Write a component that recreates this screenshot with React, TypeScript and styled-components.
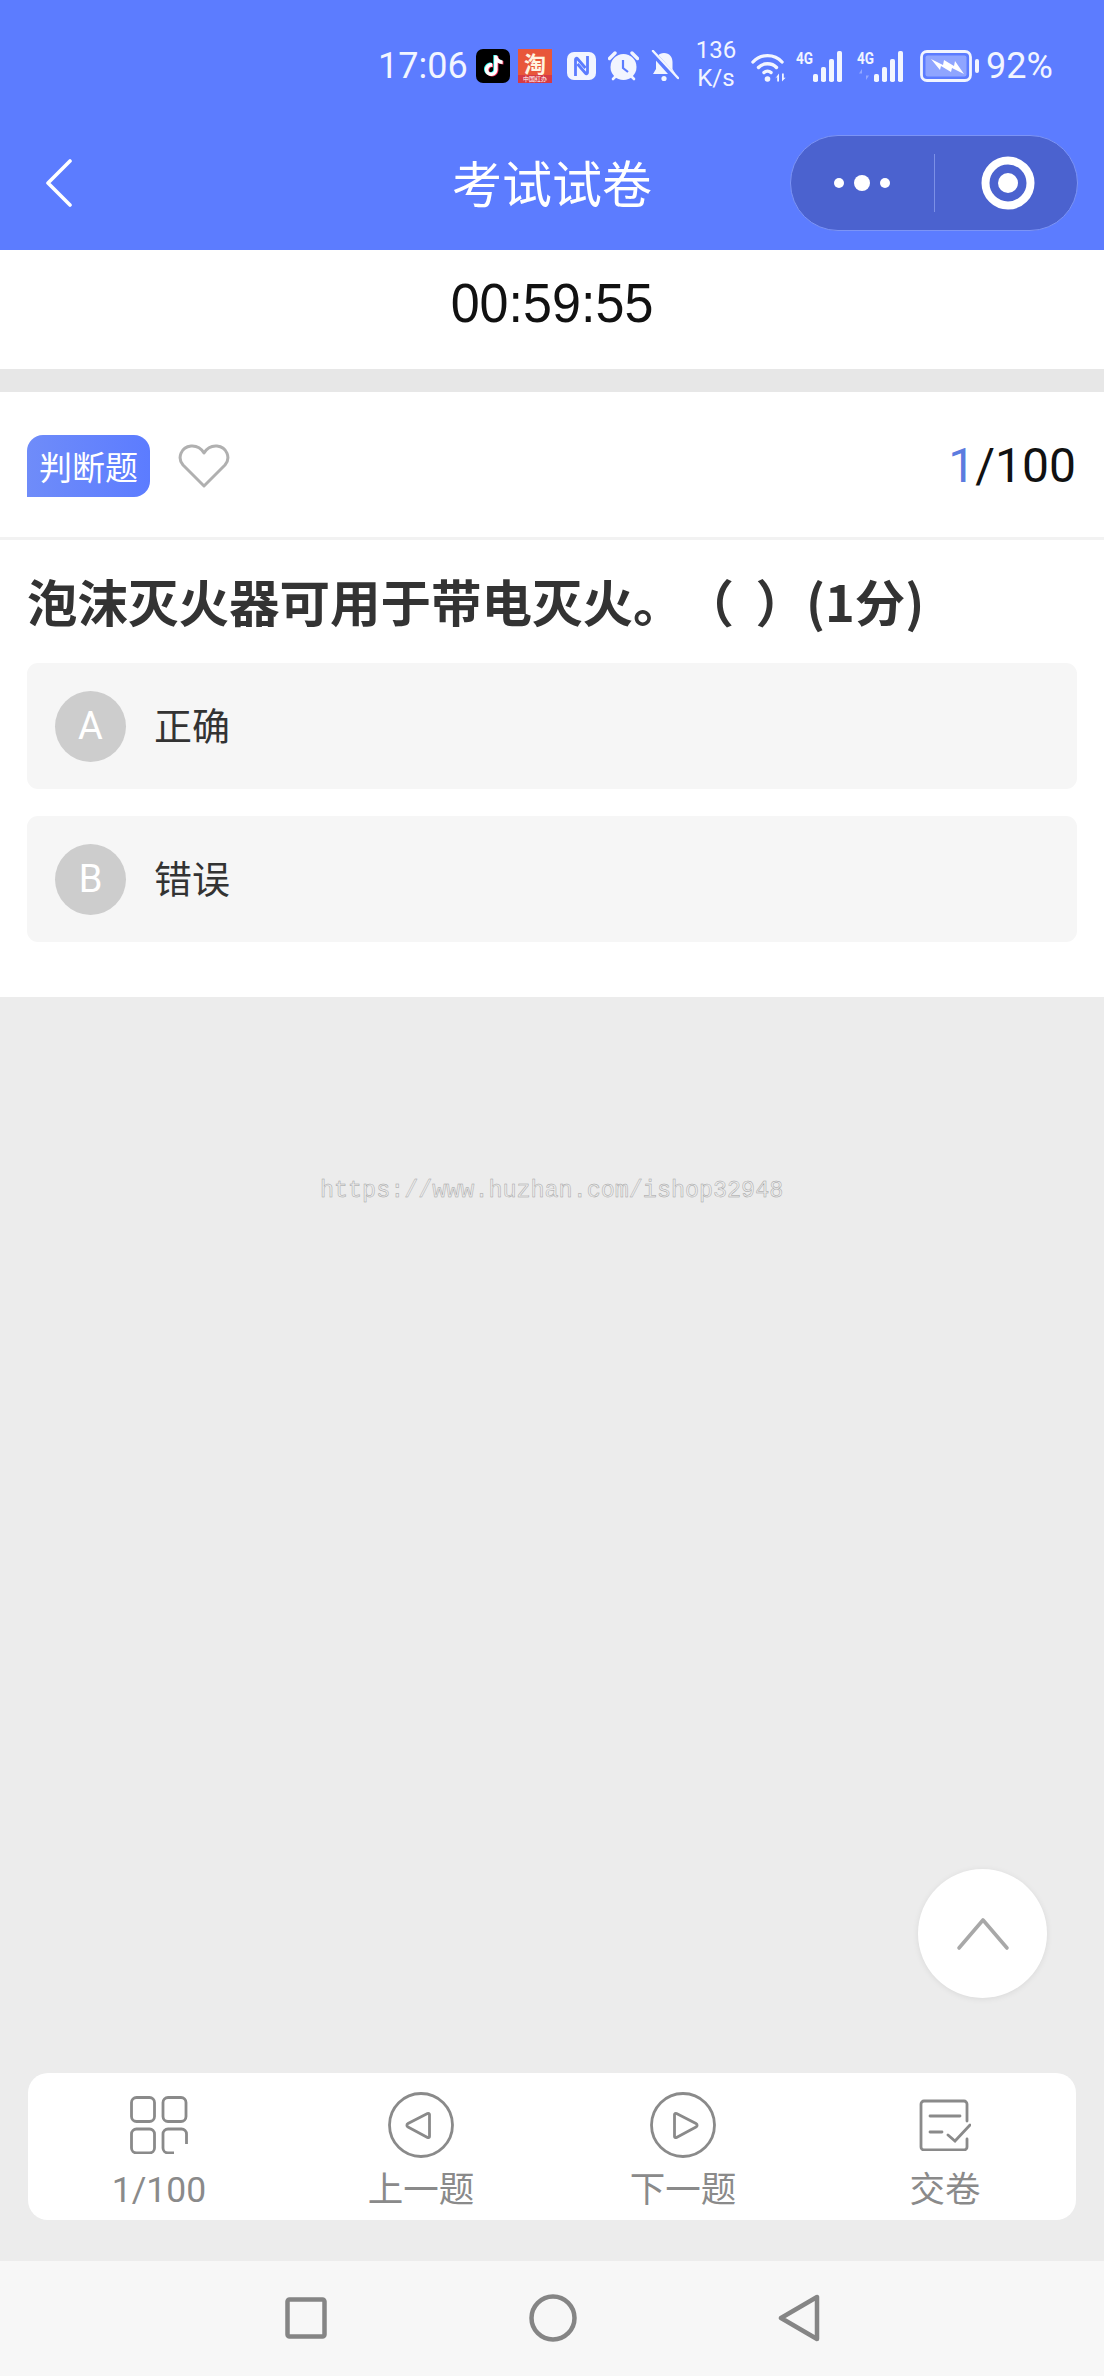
import React from 'react';
import styled, { createGlobalStyle } from 'styled-components';

const GlobalStyle = createGlobalStyle`
  html, body {
    margin: 0;
    padding: 0;
    background: #ececec;
    font-family: Roboto, "Noto Sans CJK SC", sans-serif;
  }
`;

const Page = styled.div`
  width: 1104px;
  height: 2376px;
  display: flex;
  flex-direction: column;
  overflow: hidden;
  background: #ececec;
`;

const Header = styled.header`
  background: #5c7cff;
  color: #fff;
`;

const StatusBar = styled.div`
  height: 120px;
  box-sizing: border-box;
  padding: 12px 0 0 378px;
  display: flex;
  align-items: center;
`;

const Clock = styled.span`
  font-size: 36px;
  width: 98px;
  color: #f2f5ff;
`;

const StatusIcon = styled.svg<{ $left: number }>`
  flex: none;
  margin-left: ${(p) => p.$left}px;
  display: block;
`;

const Speed = styled.span`
  flex: none;
  width: 42px;
  margin-left: 16px;
  font-size: 24px;
  line-height: 28px;
  text-align: center;
  color: #f2f5ff;
  margin-top: -5px;
`;

const BatteryText = styled.span`
  margin-left: 6px;
  font-size: 36px;
  color: #f2f5ff;
`;

const NavBar = styled.div`
  height: 130px;
  box-sizing: border-box;
  padding: 0 26px 4px;
  display: grid;
  grid-template-columns: 1fr auto 1fr;
  align-items: center;
`;

const BackIcon = styled.svg`
  display: block;
  margin-left: 20px;
`;

const NavTitle = styled.h1`
  margin: -4px 0 0;
  font-size: 50px;
  font-weight: 400;
  line-height: 60px;
  font-family: "Noto Sans CJK SC", sans-serif;
`;

const Capsule = styled.div`
  justify-self: end;
  width: 288px;
  height: 96px;
  box-sizing: border-box;
  border: 1.5px solid #7c94f6;
  border-radius: 48px;
  background: #4b62cf;
  display: flex;
  align-items: center;
`;

const CapsuleHalf = styled.div`
  flex: 1;
  display: flex;
  justify-content: center;
  align-items: center;
`;

const CapsuleLine = styled.div`
  flex: none;
  width: 1px;
  height: 58px;
  background: #7c90e6;
`;

const TargetIcon = styled.svg`
  display: block;
  margin-left: 5px;
`;

const Timer = styled.div`
  height: 119px;
  box-sizing: border-box;
  padding-bottom: 15px;
  background: #fff;
  display: flex;
  align-items: center;
  justify-content: center;
  font-family: "Liberation Sans", sans-serif;
  font-size: 56px;
  color: #111;
`;

// digits in the countdown run narrow, so the face is squeezed a little
const TimerDigits = styled.span`
  display: block;
  transform: scaleX(0.93);
`;

const Gap = styled.div`
  height: 23px;
  background: #e7e7e7;
`;

const Card = styled.section`
  background: #fff;
  padding-bottom: 55px;
`;

const CardHead = styled.div`
  height: 148px;
  box-sizing: border-box;
  padding: 2px 28px 0 27px;
  border-bottom: 3px solid #f2f2f2;
  display: flex;
  align-items: center;
`;

const Badge = styled.span`
  width: 123px;
  height: 62px;
  border-radius: 16px 16px 16px 0;
  background: linear-gradient(90deg, #6f8cf9, #5c7cff);
  color: #fff;
  font-size: 33px;
  display: flex;
  align-items: center;
  justify-content: center;
  font-family: "Noto Sans CJK SC", sans-serif;
`;

const HeartIcon = styled.svg`
  margin-left: 28px;
  display: block;
`;

const Counter = styled.div`
  margin-left: auto;
  font-size: 48px;
  color: #111;
`;

const CounterCurrent = styled.span`
  color: #5c7cdf;
`;

const Question = styled.h2`
  margin: 0;
  height: 123px;
  box-sizing: border-box;
  padding: 0 0 4px 27px;
  display: flex;
  align-items: center;
  font-family: "Noto Sans CJK SC", sans-serif;
  font-size: 50.5px;
  font-weight: 700;
  color: #333;
  white-space: pre;
  word-spacing: 10px;
  text-spacing-trim: space-all;
`;

const Options = styled.div`
  margin: 0 27px;
  display: flex;
  flex-direction: column;
  gap: 27px;
`;

const Option = styled.div`
  height: 126px;
  box-sizing: border-box;
  padding-left: 28px;
  border-radius: 11px;
  background: #f6f6f6;
  display: flex;
  align-items: center;
`;

const OptionMark = styled.span`
  width: 71px;
  height: 71px;
  border-radius: 50%;
  background: #cdcdcd;
  color: #fff;
  font-size: 38px;
  display: flex;
  align-items: center;
  justify-content: center;
`;

const OptionText = styled.span`
  margin: -6px 0 0 28px;
  font-size: 38px;
  color: #333;
  font-family: "Noto Sans CJK SC", sans-serif;
`;

const Main = styled.main`
  flex: 1;
  display: flex;
  flex-direction: column;
`;

const Watermark = styled.div`
  margin: 181px 0 0 320px;
  font-family: "Liberation Mono", monospace;
  font-size: 23.4px;
  line-height: 26px;
  color: #ececec;
  -webkit-text-stroke: 0.45px #a0a0a0;
  white-space: nowrap;
`;

const ScrollTop = styled.button`
  align-self: flex-end;
  margin: auto 57px 75px 0;
  width: 129px;
  height: 129px;
  padding: 0;
  border: none;
  border-radius: 50%;
  background: #fff;
  box-shadow: 0 1px 6px rgba(0, 0, 0, 0.08);
  display: flex;
  align-items: center;
  justify-content: center;
`;

const Toolbar = styled.nav`
  margin: 0 28px 41px;
  height: 147px;
  border-radius: 20px;
  background: #fff;
  display: grid;
  grid-template-columns: repeat(4, 1fr);
`;

const ToolItem = styled.div`
  display: flex;
  flex-direction: column;
  align-items: center;
  color: #8a8a8a;
`;

const ToolIcon = styled.div`
  height: 84px;
  padding-top: 20px;
  box-sizing: border-box;
  display: flex;
  align-items: center;
  justify-content: center;
`;

const ToolLabel = styled.span`
  margin-top: 8px;
  font-size: 35.5px;
  line-height: 50px;
  font-family: Roboto, "Noto Sans CJK SC", sans-serif;
`;

const SystemBar = styled.div`
  height: 115px;
  box-sizing: border-box;
  padding: 0 0 2px 285px;
  background: #f7f7f7;
  display: flex;
  align-items: center;
`;

const SystemButton = styled.svg<{ $left?: number }>`
  display: block;
  margin-left: ${(p) => p.$left ?? 0}px;
`;

const tiktokPath =
  'M12.525.02c1.31-.02 2.61-.01 3.91-.02.08 1.53.63 3.09 1.75 4.17 1.12 1.11 2.7 1.62 4.24 1.79v4.03c-1.44-.05-2.89-.35-4.2-.97-.57-.26-1.1-.59-1.62-.93-.01 2.92.01 5.84-.02 8.75-.08 1.4-.54 2.79-1.35 3.94-1.31 1.92-3.58 3.17-5.91 3.21-1.43.08-2.86-.31-4.08-1.03-2.02-1.19-3.44-3.37-3.65-5.71-.02-.5-.03-1-.01-1.49.18-1.9 1.12-3.72 2.58-4.96 1.66-1.44 3.98-2.13 6.15-1.72.02 1.48-.04 2.96-.04 4.44-.99-.32-2.15-.23-3.02.37-.63.41-1.11 1.04-1.36 1.75-.21.51-.15 1.07-.14 1.61.24 1.64 1.82 3.02 3.5 2.87 1.12-.01 2.19-.66 2.77-1.61.19-.33.4-.67.41-1.06.1-1.79.06-3.57.07-5.36.01-4.03-.01-8.05.02-12.07z';

const ink = '#f2f5ff';

const TiktokIcon = () => (
  <StatusIcon $left={0} width="34" height="34" viewBox="0 0 34 34">
    <rect width="34" height="34" rx="7" fill="#000" />
    <g transform="translate(7.5 6.5) scale(0.85)">
      <path d={tiktokPath} fill="#25f4ee" transform="translate(-1 -0.6)" />
      <path d={tiktokPath} fill="#fe2c55" transform="translate(1 0.6)" />
      <path d={tiktokPath} fill="#fff" />
    </g>
  </StatusIcon>
);

const TaobaoIcon = () => (
  <StatusIcon $left={8} width="34" height="34" viewBox="0 0 34 34">
    <rect width="34" height="34" fill="#e8563a" />
    <rect y="26" width="34" height="8" fill="#d63a45" />
    <text x="17" y="22.5" fontSize="22" fontWeight="700" fill="#fff4e0" textAnchor="middle" fontFamily="Noto Sans CJK SC">
      淘
    </text>
    <text x="17" y="32" fontSize="6" fill="#fff" textAnchor="middle" fontFamily="Noto Sans CJK SC">
      中国红办
    </text>
  </StatusIcon>
);

const NfcIcon = () => (
  <StatusIcon $left={15} width="29" height="28" viewBox="0 0 29 28">
    <rect width="29" height="28" rx="7" fill={ink} />
    <path d="M8.500 24V7.500c0-1.200 1.200-1.700 2-.8L18.500 16" fill="none" stroke="#5c7cff" strokeWidth="2.800" />
    <path d="M20.500 4v16.500c0 1.200-1.200 1.700-2 .8L10.500 12" fill="none" stroke="#5c7cff" strokeWidth="2.800" />
  </StatusIcon>
);

const AlarmIcon = () => (
  <StatusIcon $left={12} width="31" height="30" viewBox="0 0 31 30">
    <circle cx="15.500" cy="16" r="13" fill={ink} />
    <path d="M1.500 7.500 7 2M29.500 7.500 24 2" stroke={ink} strokeWidth="3.400" strokeLinecap="round" />
    <path d="M5 28l2.500-2.500M26 28l-2.500-2.500" stroke={ink} strokeWidth="2.600" strokeLinecap="round" />
    <path d="M15 9v8l5 4" fill="none" stroke="#5c7cff" strokeWidth="2.200" />
  </StatusIcon>
);

const MuteBellIcon = () => (
  <StatusIcon $left={11} width="29" height="33" viewBox="0 0 29 33">
    <path d="M14 3c5.500 0 8.500 4 8.500 9v7l3 5H3l3-5v-7c0-5 2.500-9 8-9z" fill={ink} />
    <circle cx="14" cy="28.500" r="2.600" fill={ink} />
    <path d="M2 2l25 28" stroke="#5c7cff" strokeWidth="5.500" />
    <path d="M3 1l25 27" stroke={ink} strokeWidth="2.400" strokeLinecap="round" />
  </StatusIcon>
);

const WifiIcon = () => (
  <StatusIcon $left={14} width="37" height="31" viewBox="0 0 37 31">
    <path d="M2 11C9.500 2.500 23.500 2.500 31 11" fill="none" stroke={ink} strokeWidth="3.400" strokeLinecap="round" />
    <path d="M7.500 16.500c4.500-5 13.500-5 18 0" fill="none" stroke={ink} strokeWidth="3.400" strokeLinecap="round" />
    <path d="M13 21.500c2-1.800 5-1.800 7 0" fill="none" stroke={ink} strokeWidth="3.400" strokeLinecap="round" />
    <circle cx="16.500" cy="28" r="2.800" fill={ink} />
    <path d="M28 22.500v8h-1.800v-4.500l-2 1.500zM31 22.500v8l3.600-3.800h-1.800v-4.200z" fill={ink} />
  </StatusIcon>
);

// 4G label with the four signal bars; dim arrows only on the second SIM
const SignalIcon = ({ left, arrows }: { left: number; arrows?: boolean }) => (
  <StatusIcon $left={left} width="50" height="32" viewBox="0 0 50 32">
    <text x="0" y="14" fontSize="17" fontWeight="700" fill={ink} fontFamily="Roboto" textLength="17" lengthAdjust="spacingAndGlyphs">
      4G
    </text>
    {arrows && <path d="M5 30V19l-3 4.500h3zM9 19v11l3-4.500H9z" fill="#93a8ff" />}
    {[
      { x: 17, y: 24 },
      { x: 25, y: 17 },
      { x: 33, y: 9 },
      { x: 41, y: 1 },
    ].map((bar) => (
      <rect key={bar.x} x={bar.x} y={bar.y} width="5" height={32 - bar.y} rx="1.800" fill={ink} />
    ))}
  </StatusIcon>
);

const BatteryIcon = () => (
  <StatusIcon $left={13} width="60" height="32" viewBox="0 0 60 32">
    <rect x="1.500" y="1.500" width="49" height="29" rx="5.500" fill="none" stroke={ink} strokeWidth="2.800" />
    <rect x="5.500" y="5.500" width="41" height="21" rx="2" fill="#8fa5ff" />
    <rect x="55" y="9" width="4" height="14" rx="2" fill={ink} />
    <path d="M11 9l12 6 1-5 10 6 1-5 9 13-12-6-1 4-10-6-1 4z" fill="#fff" />
  </StatusIcon>
);

const toolStroke = '#8a8a8a';

const GridIcon = () => (
  <svg width="58" height="58" viewBox="0 0 58 58" fill="none" stroke={toolStroke} strokeWidth="2.800">
    <rect x="1.500" y="1.500" width="23" height="24" rx="5" />
    <rect x="33" y="1.500" width="23" height="24" rx="5" />
    <rect x="1.500" y="33" width="23" height="24" rx="5" />
    <path d="M56.500 48v-10a5 5 0 0 0-5-5H38a5 5 0 0 0-5 5v14a5 5 0 0 0 5 5h6" />
  </svg>
);

const PrevIcon = () => (
  <svg width="66" height="66" viewBox="0 0 66 66" fill="none" stroke={toolStroke} strokeWidth="2.800" strokeLinejoin="round">
    <circle cx="33" cy="33" r="31.500" />
    <path d="M41.500 22.500v22c0 1-1 1.500-2 1L20 35c-1.500-.8-1.500-2.700 0-3.500l19.500-10c1-.5 2 0 2 1z" />
  </svg>
);

const NextIcon = () => (
  <svg width="66" height="66" viewBox="0 0 66 66" fill="none" stroke={toolStroke} strokeWidth="2.800" strokeLinejoin="round">
    <circle cx="33" cy="33" r="31.500" />
    <path d="M24.500 22.500v22c0 1 1 1.500 2 1L46 35c1.500-.8 1.500-2.700 0-3.500l-19.500-10c-1-.5-2 0-2 1z" />
  </svg>
);

const SubmitIcon = () => (
  <svg width="52" height="52" viewBox="0 0 52 52" fill="none" stroke={toolStroke} strokeWidth="2.800" strokeLinecap="round">
    <path d="M48 22V5a3 3 0 0 0-3-3H5a3 3 0 0 0-3 3v43a3 3 0 0 0 3 3h40a3 3 0 0 0 3-3v-8" />
    <path d="M11 17h30M11 33h12M29 36l7 6 15-16" />
  </svg>
);

const tools = [
  { label: '1/100', icon: <GridIcon /> },
  { label: '上一题', icon: <PrevIcon /> },
  { label: '下一题', icon: <NextIcon /> },
  { label: '交卷', icon: <SubmitIcon /> },
];

const options = [
  { mark: 'A', text: '正确' },
  { mark: 'B', text: '错误' },
];

export default function App() {
  return (
    <Page>
      <GlobalStyle />
      <Header>
        <StatusBar>
          <Clock>17:06</Clock>
          <TiktokIcon />
          <TaobaoIcon />
          <NfcIcon />
          <AlarmIcon />
          <MuteBellIcon />
          <Speed>
            136
            <br />
            K/s
          </Speed>
          <WifiIcon />
          <SignalIcon left={8} />
          <SignalIcon left={11} arrows />
          <BatteryIcon />
          <BatteryText>92%</BatteryText>
        </StatusBar>
        <NavBar>
          <BackIcon width="26" height="48" viewBox="0 0 26 48" fill="none" stroke="#fff" strokeWidth="3.600" strokeLinecap="round" strokeLinejoin="round">
            <path d="M24 2 2 24l22 22" />
          </BackIcon>
          <NavTitle>考试试卷</NavTitle>
          <Capsule>
            <CapsuleHalf>
              <svg width="56" height="20" viewBox="0 0 56 20" fill="#fff">
                <circle cx="5" cy="10" r="5" />
                <circle cx="28" cy="10" r="8" />
                <circle cx="51" cy="10" r="5" />
              </svg>
            </CapsuleHalf>
            <CapsuleLine />
            <CapsuleHalf>
              <TargetIcon width="54" height="54" viewBox="0 0 54 54">
                <circle cx="27" cy="27" r="22.500" fill="none" stroke="#fff" strokeWidth="8" />
                <circle cx="27" cy="27" r="10" fill="#fff" />
              </TargetIcon>
            </CapsuleHalf>
          </Capsule>
        </NavBar>
      </Header>
      <Timer>
        <TimerDigits>00:59:55</TimerDigits>
      </Timer>
      <Gap />
      <Card>
        <CardHead>
          <Badge>判断题</Badge>
          <HeartIcon width="52" height="44" viewBox="0 0 52 44" fill="none" stroke="#b0b0b0" strokeWidth="3" strokeLinejoin="round">
            <path d="M26 42 5 21C-1 14 3 3 13 2c6-.5 10 2 13 7 3-5 7-7.500 13-7 10 1 14 12 8 19z" />
          </HeartIcon>
          <Counter>
            <CounterCurrent>1</CounterCurrent>/100
          </Counter>
        </CardHead>
        <Question>泡沫灭火器可用于带电灭火。（ ）(1分)</Question>
        <Options>
          {options.map((option) => (
            <Option key={option.mark}>
              <OptionMark>{option.mark}</OptionMark>
              <OptionText>{option.text}</OptionText>
            </Option>
          ))}
        </Options>
      </Card>
      <Main>
        <Watermark>https://www.huzhan.com/ishop32948</Watermark>
        <ScrollTop aria-label="top">
          <svg width="54" height="34" viewBox="0 0 54 34" fill="none" stroke="#a8a8a8" strokeWidth="3.600" strokeLinecap="round" strokeLinejoin="round">
            <path d="M3 31 27 3l24 28" />
          </svg>
        </ScrollTop>
        <Toolbar>
          {tools.map((tool) => (
            <ToolItem key={tool.label}>
              <ToolIcon>{tool.icon}</ToolIcon>
              <ToolLabel>{tool.label}</ToolLabel>
            </ToolItem>
          ))}
        </Toolbar>
      </Main>
      <SystemBar>
        <SystemButton width="42" height="42" viewBox="0 0 42 42" fill="none" stroke="#858585" strokeWidth="4.500" strokeLinejoin="round">
          <rect x="2.500" y="2.500" width="37" height="37" rx="2" />
        </SystemButton>
        <SystemButton $left={202} width="48" height="48" viewBox="0 0 48 48" fill="none" stroke="#858585" strokeWidth="4.500">
          <circle cx="24" cy="24" r="21.500" />
        </SystemButton>
        <SystemButton $left={201} width="42" height="48" viewBox="0 0 42 48" fill="none" stroke="#858585" strokeWidth="4.500" strokeLinejoin="round">
          <path d="M39 3v42L3 24z" />
        </SystemButton>
      </SystemBar>
    </Page>
  );
}
